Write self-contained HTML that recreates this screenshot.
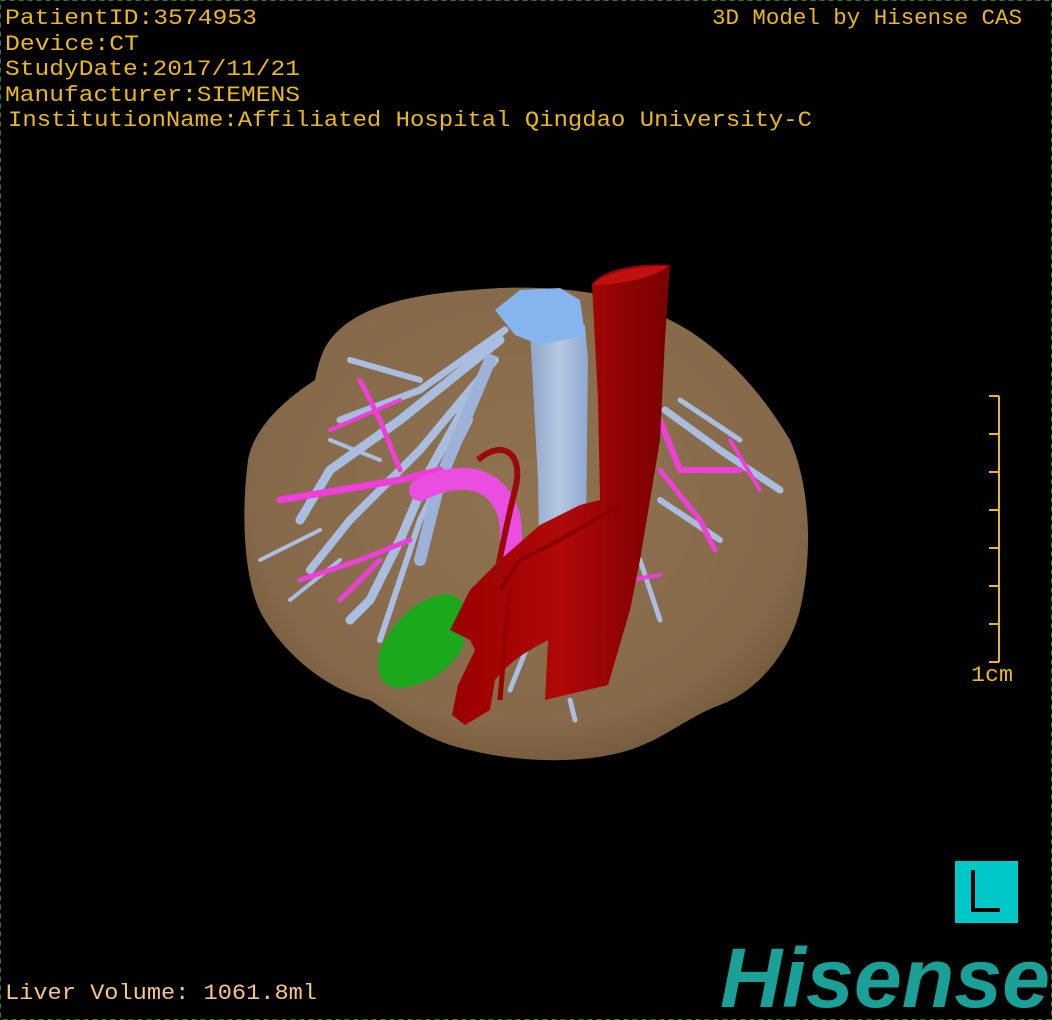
<!DOCTYPE html>
<html><head><meta charset="utf-8"><style>
html,body{margin:0;padding:0;background:#000;}
body{width:1052px;height:1020px;overflow:hidden;position:relative;}
svg{position:absolute;left:0;top:0;}
</style></head><body>
<svg width="1052" height="1020" viewBox="0 0 1052 1020" xmlns="http://www.w3.org/2000/svg">
<defs>
<radialGradient id="lv" cx="0.5" cy="0.45" r="0.6">
<stop offset="0" stop-color="#8f7350"/><stop offset="0.8" stop-color="#86694a"/><stop offset="1" stop-color="#6e5538"/>
</radialGradient>
<linearGradient id="ao" x1="0" x2="1"><stop offset="0" stop-color="#9a0000"/><stop offset="0.5" stop-color="#b00808"/><stop offset="1" stop-color="#7a0000"/></linearGradient>
<linearGradient id="ivc" x1="0" x2="1"><stop offset="0" stop-color="#8fa6c8"/><stop offset="0.5" stop-color="#b5c8e2"/><stop offset="1" stop-color="#8ea8d0"/></linearGradient>
</defs>
<rect x="0.5" y="0.5" width="1051" height="1019" fill="#000" stroke="#2f7a2f" stroke-width="1" stroke-dasharray="5,4"/>
<!-- liver -->
<path d="M330,340 C360,300 430,292 500,288 C560,286 620,292 670,320 C720,345 760,390 790,440 C812,490 812,560 800,610 C790,650 760,690 720,705 C680,720 660,745 610,755 C560,765 500,760 450,745 C420,735 400,720 370,700 C330,690 290,660 265,620 C245,590 240,520 248,460 C255,420 300,390 315,380 C318,365 322,350 330,340 Z" fill="url(#lv)"/>
<!-- blue hepatic veins left -->
<g stroke="#a9bde0" stroke-linecap="round" fill="none">
<path d="M505,330 L420,390 L340,420" stroke-width="7"/>
<path d="M500,340 L400,420 L330,470 L300,520" stroke-width="9"/>
<path d="M495,360 L420,450 L350,520 L310,570" stroke-width="8"/>
<path d="M480,380 L430,470 L400,540 L370,600 L350,620" stroke-width="9"/>
<path d="M470,420 L420,520 L400,580 L380,640" stroke-width="6"/>
<path d="M490,360 L440,480 L420,560" stroke-width="12" stroke="#9cb2d8"/>
<path d="M350,360 L420,380" stroke-width="6"/>
<path d="M330,440 L380,460" stroke-width="4"/>
<path d="M260,560 L320,530" stroke-width="4"/>
<path d="M290,600 L340,560" stroke-width="4"/>
<path d="M665,410 L720,450 L780,490" stroke-width="7"/>
<path d="M680,400 L740,440" stroke-width="5"/>
<path d="M660,500 L720,540" stroke-width="6"/>
<path d="M640,560 L660,620" stroke-width="5"/>
<path d="M570,700 L575,720" stroke-width="5"/>
<path d="M530,640 L510,690" stroke-width="5"/>
</g>
<!-- magenta portal -->
<g stroke="#ee3fd8" stroke-linecap="round" fill="none">
<path d="M280,500 L340,490 L400,480 L440,470" stroke-width="7"/>
<path d="M300,580 L360,560 L410,540" stroke-width="5"/>
<path d="M340,600 L380,560" stroke-width="5"/>
<path d="M360,380 L380,420 L400,470" stroke-width="5"/>
<path d="M330,430 L400,400" stroke-width="4"/>
<path d="M660,420 L680,470 L740,470" stroke-width="6"/>
<path d="M660,470 L700,520 L715,550" stroke-width="5"/>
<path d="M730,440 L760,490" stroke-width="4"/>
<path d="M630,580 L660,575" stroke-width="4"/>
<path d="M420,490 C460,470 500,475 510,520 C515,560 500,590 495,600" stroke-width="22" stroke="#ea4ee0"/>
</g>
<ellipse cx="495" cy="600" rx="18" ry="14" fill="#ff2cf0"/>
<!-- IVC light blue -->
<path d="M530,330 L585,325 L588,360 L585,620 L560,640 L540,610 L538,480 Z" fill="url(#ivc)"/>
<path d="M495,310 L520,290 L560,288 L580,300 L585,335 L540,345 L515,335 Z" fill="#86b4ee"/>
<!-- green gallbladder -->
<path d="M440,595 C460,590 470,605 465,640 C458,665 430,685 400,688 C380,688 375,670 380,650 C390,625 415,600 440,595 Z" fill="#1ca81c"/>
<!-- aorta -->
<path d="M592,285 C600,270 640,262 670,265 L665,340 L660,440 L650,500 L640,560 L630,610 L608,685 L545,700 L548,640 C530,650 510,660 495,680 L490,710 L465,725 L452,715 L458,685 L475,650 L470,640 L450,630 L470,590 L500,560 L540,525 L580,505 L600,500 L598,400 Z" fill="url(#ao)"/>
<path d="M592,285 C605,272 640,265 668,266 C660,275 625,285 592,285 Z" fill="#c01010"/>
<path d="M620,505 L560,540 L520,560 L500,590" stroke="#8a0000" stroke-width="4" fill="none"/>
<path d="M500,700 L505,640 L510,590" stroke="#9a0000" stroke-width="5" fill="none"/>
<path d="M478,460 C500,440 525,450 515,490 C505,530 500,560 495,580" stroke="#9a0a0a" stroke-width="6" fill="none"/>
<!-- text -->
<g font-family="Liberation Mono, monospace" font-size="22" fill="#e8b820">
<text x="5" y="24" textLength="252" lengthAdjust="spacingAndGlyphs">PatientID:3574953</text>
<text x="5" y="50" textLength="134" lengthAdjust="spacingAndGlyphs">Device:CT</text>
<text x="5" y="75" textLength="295" lengthAdjust="spacingAndGlyphs">StudyDate:2017/11/21</text>
<text x="5" y="101" textLength="295" lengthAdjust="spacingAndGlyphs">Manufacturer:SIEMENS</text>
<text x="8" y="126" textLength="804" lengthAdjust="spacingAndGlyphs">InstitutionName:Affiliated Hospital Qingdao University-C</text>
<text x="712" y="24" textLength="310" lengthAdjust="spacingAndGlyphs">3D Model by Hisense CAS</text>
<text x="971" y="681" textLength="42" lengthAdjust="spacingAndGlyphs">1cm</text>
<text x="5" y="999" textLength="312" lengthAdjust="spacingAndGlyphs" fill="#f2c68a">Liver Volume: 1061.8ml</text>
</g>
<!-- scale bar -->
<g stroke="#e8b820" stroke-width="2">
<line x1="999" y1="396" x2="999" y2="662"/>
<line x1="989" y1="396" x2="999" y2="396"/><line x1="989" y1="434" x2="999" y2="434"/>
<line x1="989" y1="472" x2="999" y2="472"/><line x1="989" y1="510" x2="999" y2="510"/>
<line x1="989" y1="548" x2="999" y2="548"/><line x1="989" y1="586" x2="999" y2="586"/>
<line x1="989" y1="624" x2="999" y2="624"/><line x1="989" y1="662" x2="999" y2="662"/>
</g>
<!-- L box -->
<rect x="955" y="861" width="63" height="62" fill="#00c8c8"/>
<path d="M973,870 L973,910 L1000,910" stroke="#000" stroke-width="4" fill="none"/>
<!-- Hisense -->
<text x="720" y="1007" font-family="Liberation Sans, sans-serif" font-weight="bold" font-style="italic" font-size="84" fill="#1aa096" textLength="330" lengthAdjust="spacingAndGlyphs">Hisense</text>
</svg>
</body></html>
